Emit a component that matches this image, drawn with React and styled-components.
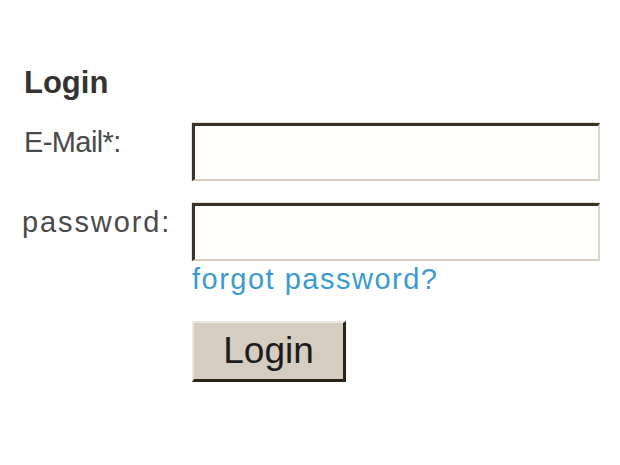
import React from 'react';
import styled, { createGlobalStyle } from 'styled-components';

const GlobalStyle = createGlobalStyle`
    html, body {
        margin: 0;
        padding: 0;
        background: #ffffff;
        font-family: "Liberation Sans", Arial, sans-serif;
    }
`

const Wrapper = styled.div`
    padding: 65px 20px 0 24px;
    width: 620px;
    box-sizing: border-box;
`

const Heading = styled.h2`
    margin: 0 0 22px 0;
    font-size: 31px;
    line-height: 36px;
    font-weight: bold;
    color: #333333;
`

const Form = styled.form`
    display: grid;
    grid-template-columns: 168px 408px;
    row-gap: 22px;
`

const Label = styled.label`
    padding-top: 3px;
    font-size: 29px;
    line-height: 33px;
    color: #4a4a4a;
    margin-left: ${props => props.shift || 0}px;
    letter-spacing: ${props => props.spacing || 0}px;
`

const Input = styled.input`
    display: block;
    box-sizing: border-box;
    width: 408px;
    height: 58px;
    margin: 0;
    padding: 0 8px;
    background: #fffffd;
    border-style: solid;
    border-width: 3px 2px 2px 3px;
    border-color: #3a3224 #dcd5c8 #d6cfc0 #3a3224;
    box-shadow: 0 -1px 0 #e9e3d6, -1px 0 0 #e9e3d6;
    font-size: 22px;
    outline: none;
`

const Field = styled.div`
    display: flex;
    flex-direction: column;
    align-items: flex-start;
`

const Forgot = styled.a`
    margin-top: 2px;
    font-size: 29px;
    line-height: 33px;
    letter-spacing: 1.5px;
    color: #3b9bd0;
    text-decoration: none;
    cursor: pointer;
`

const Button = styled.button`
    margin-top: 25px;
    width: 154px;
    height: 61px;
    box-sizing: border-box;
    background: #d5cdbf;
    border-style: solid;
    border-width: 2px 3px 3px 2px;
    border-color: #ece7dd #2a2418 #2a2418 #ece7dd;
    font-family: "Liberation Sans", Arial, sans-serif;
    font-size: 37px;
    color: #1c1c1c;
    padding: 0;
    cursor: pointer;
`

function App() {
    return (
        <Wrapper>
            <GlobalStyle />
            <Heading>Login</Heading>
            <Form onSubmit={e => e.preventDefault()}>
                <Label htmlFor="email" spacing={-0.6}>E-Mail*:</Label>
                <Input id="email" type="text" />

                <Label htmlFor="password" shift={-2} spacing={1.9}>password:</Label>
                <Field>
                    <Input id="password" type="password" />
                    <Forgot>forgot password?</Forgot>
                    <Button type="submit">Login</Button>
                </Field>
            </Form>
        </Wrapper>
    );
}

export default App;
